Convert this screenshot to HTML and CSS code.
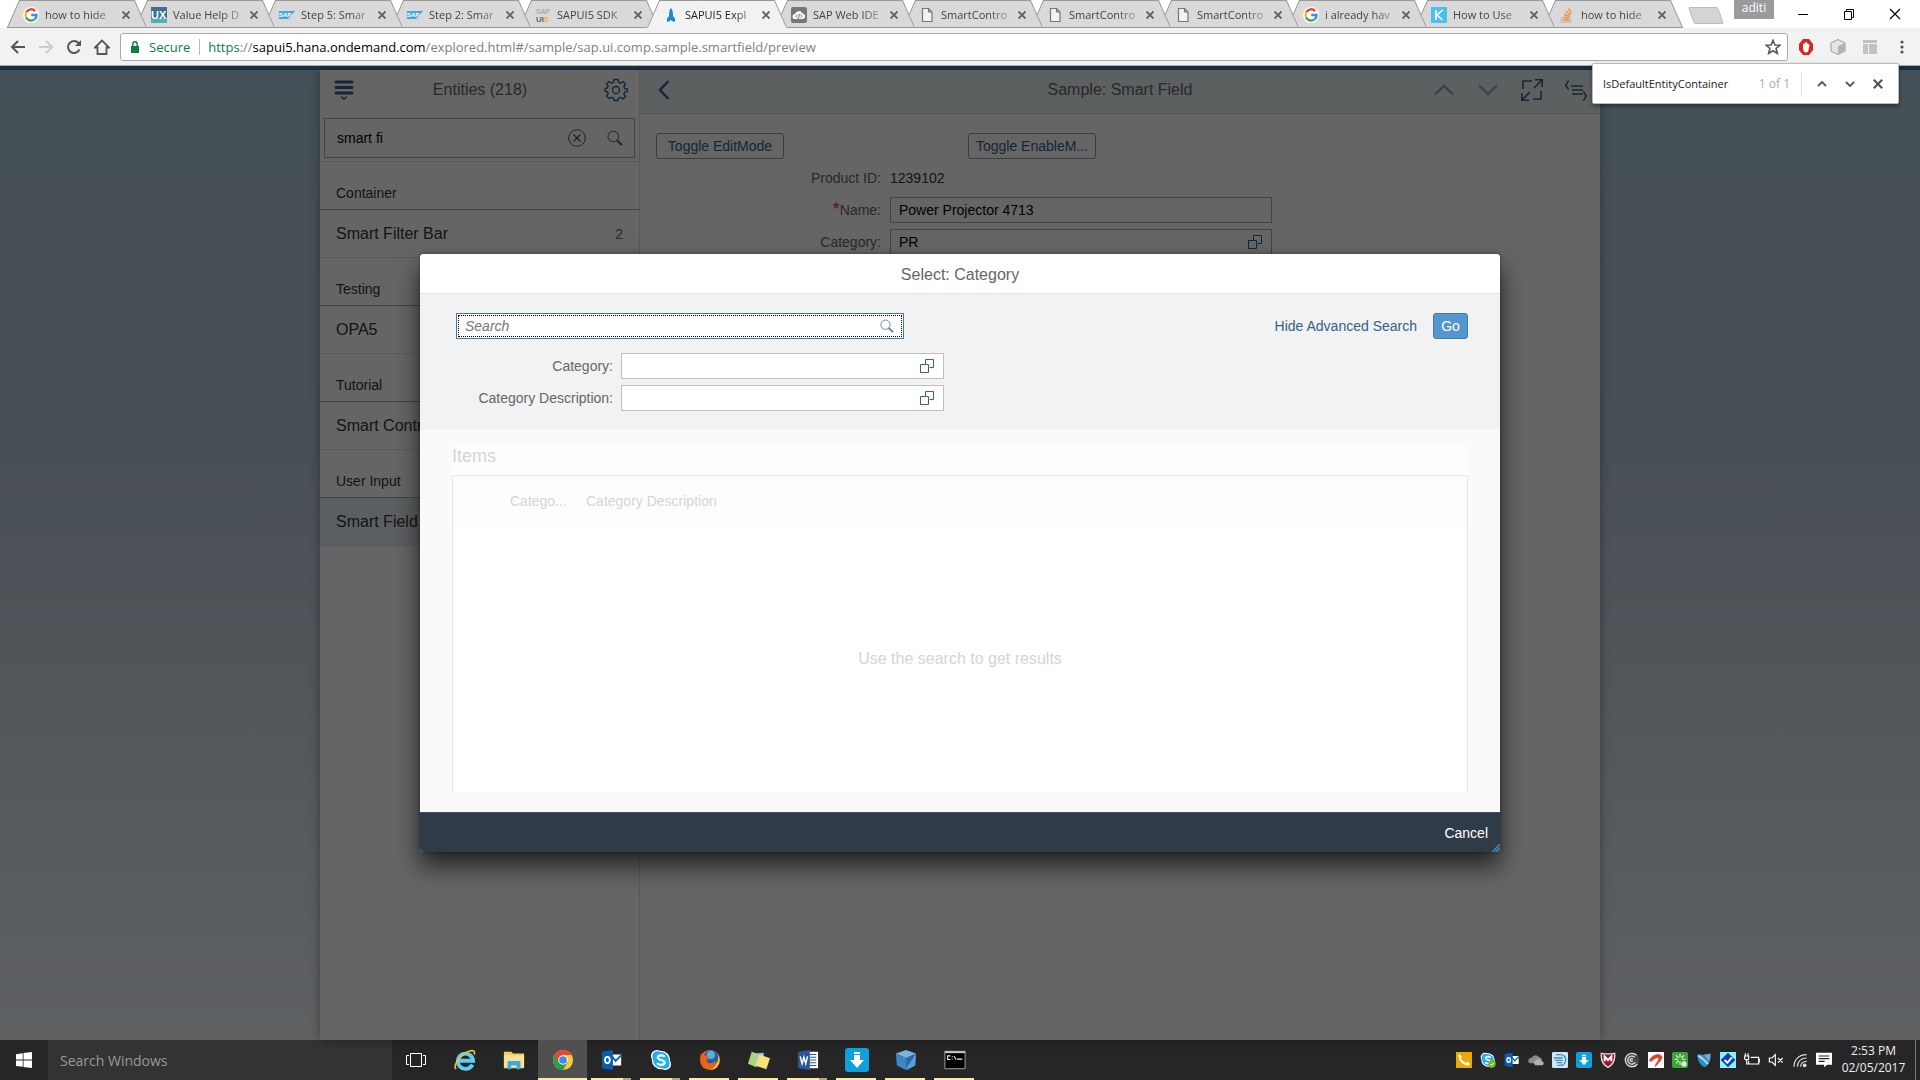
FILE: index.html
```html
<!DOCTYPE html>
<html lang="en">
<head>
<meta charset="utf-8">
<title>SAPUI5 Explored</title>
<link rel="stylesheet" href="styles.css">
</head>
<body>
<svg class="sprite" aria-hidden="true">
  <symbol id="x" viewBox="0 0 10 10"><path d="M1.5 1.5l7 7M8.500 1.500l-7 7" fill="none" stroke="currentColor" stroke-width="1.800"/></symbol>
  <symbol id="google" viewBox="0 0 16 16"><circle cx="8" cy="8" r="8" fill="#fff"/><g fill="none" stroke-width="2.400"><path d="M12.200 4A5.600 5.600 0 0 0 3.200 5.300" stroke="#ea4335"/><path d="M3.200 5.300a5.600 5.600 0 0 0 0 5.400" stroke="#fbbc05"/><path d="M3.200 10.700a5.600 5.600 0 0 0 8.400 1.700" stroke="#34a853"/><path d="M11.600 12.400A5.500 5.500 0 0 0 13.600 8H8.200" stroke="#4285f4"/></g></symbol>
  <symbol id="page" viewBox="0 0 16 16"><path d="M3.500 1.500h6l3.500 3.500v9.500H3.500zM9.500 1.500V5H13" fill="#f2f2f2" stroke="#777" stroke-width="1.200"/></symbol>
  <symbol id="chev-up" viewBox="0 0 20 12"><path d="M1 10.500L10 2l9 8.500" fill="none" stroke="currentColor" stroke-width="2.400"/></symbol>
  <symbol id="chev-down" viewBox="0 0 20 12"><path d="M1 1.500L10 10l9-8.500" fill="none" stroke="currentColor" stroke-width="2.400"/></symbol>
  <symbol id="lens" viewBox="0 0 16 16"><circle cx="6.300" cy="6.500" r="5.300" fill="none" stroke="currentColor"/><path d="M10 10.500l5 4.500" stroke="currentColor" stroke-width="2"/></symbol>
  <symbol id="help" viewBox="0 0 14 14"><path d="M.5 5.500h8v8h-8zM5.500 5V.5h8v8H9.500" fill="none" stroke="currentColor"/></symbol>
  <symbol id="outlook" viewBox="0 0 24 24"><path d="M10 6h12v12H10z" fill="#fff"/><path d="M12 8l4 5 6-6" fill="none" stroke="#0a5eb0" stroke-width="2"/><path d="M1 3l12-2v22L1 21z" fill="#0a5eb0"/><ellipse cx="7" cy="12" rx="2.600" ry="3.400" fill="none" stroke="#fff" stroke-width="2"/></symbol>
  <symbol id="skype" viewBox="0 0 24 24"><circle cx="7.500" cy="7.500" r="6.500" fill="#fff"/><circle cx="16.500" cy="16.500" r="6.500" fill="#fff"/><circle cx="12" cy="12" r="10" fill="#fff"/><circle cx="8" cy="8" r="5.500" fill="#1eaeea"/><circle cx="16" cy="16" r="5.500" fill="#1eaeea"/><circle cx="12" cy="12" r="8.600" fill="#1eaeea"/><path d="M16 8.500c-1-2-7.500-2.500-7.500.8S16 11.500 16 14.800 9 18 8 15.200" fill="none" stroke="#fff" stroke-width="2.400"/></symbol>
  <symbol id="download" viewBox="0 0 24 24"><rect width="24" height="24" rx="3" fill="#0e9fdd"/><path d="M9 4h6v2H9zM9 7h6v5h4l-7 8-7-8h4z" fill="#fff"/></symbol>
</svg>

<header class="browser">
  <div class="strip">
    <ul class="tabs">
      <li class="tab"><svg class="fav"><use href="#google"/></svg><span class="title">how to hide</span><button class="close" aria-label="Close tab"><svg><use href="#x"/></svg></button></li>
      <li class="tab"><svg class="fav" viewBox="0 0 16 16"><path d="M0 0h16v11H0z" fill="#3b7193"/><path d="M0 11h16v5H0z" fill="#56aeb5"/><text x="0" y="12" font-size="11" font-weight="bold" font-family="Liberation Sans, sans-serif" fill="#fff">UX</text></svg><span class="title">Value Help D</span><button class="close" aria-label="Close tab"><svg><use href="#x"/></svg></button></li>
      <li class="tab"><svg class="fav" viewBox="0 0 16 16"><path d="M0 4h16L9 12H0z" fill="#4aa5d8"/><text x="0" y="10" font-size="6" font-weight="bold" font-family="Liberation Sans, sans-serif" fill="#fff">SAP</text></svg><span class="title">Step 5: Smar</span><button class="close" aria-label="Close tab"><svg><use href="#x"/></svg></button></li>
      <li class="tab"><svg class="fav" viewBox="0 0 16 16"><path d="M0 4h16L9 12H0z" fill="#4aa5d8"/><text x="0" y="10" font-size="6" font-weight="bold" font-family="Liberation Sans, sans-serif" fill="#fff">SAP</text></svg><span class="title">Step 2: Smar</span><button class="close" aria-label="Close tab"><svg><use href="#x"/></svg></button></li>
      <li class="tab"><svg class="fav" viewBox="0 0 16 16" font-family="Liberation Sans, sans-serif" font-size="7"><text x="1" y="7" fill="#999">SAP</text><text x="1" y="15" font-size="8" font-weight="bold" fill="#666">UI<tspan fill="#f0b72f">5</tspan></text></svg><span class="title">SAPUI5 SDK</span><button class="close" aria-label="Close tab"><svg><use href="#x"/></svg></button></li>
      <li class="tab active"><svg class="fav" viewBox="0 0 16 16"><path d="M8 1c2 2 2 6 2 8l2 2.500V15l-2.500-.7L8 13l-1.500 1.300L4 15v-3.500L6 9c0-2 0-6 2-8z" fill="#1190cf"/></svg><span class="title">SAPUI5 Expl</span><button class="close" aria-label="Close tab"><svg><use href="#x"/></svg></button></li>
      <li class="tab"><svg class="fav" viewBox="0 0 16 16"><rect width="16" height="16" rx="2" fill="#777"/><path d="M4 12a2.500 2.500 0 0 1 0-5 4 4 0 0 1 7.500-.5A2.800 2.800 0 0 1 12 12z" fill="#fff"/><path d="M6.500 7.500L5 9.300 6.500 11M9.500 7.500L11 9.300 9.500 11M8.500 7l-1 5" fill="none" stroke="#777"/></svg><span class="title">SAP Web IDE</span><button class="close" aria-label="Close tab"><svg><use href="#x"/></svg></button></li>
      <li class="tab"><svg class="fav"><use href="#page"/></svg><span class="title">SmartContro</span><button class="close" aria-label="Close tab"><svg><use href="#x"/></svg></button></li>
      <li class="tab"><svg class="fav"><use href="#page"/></svg><span class="title">SmartContro</span><button class="close" aria-label="Close tab"><svg><use href="#x"/></svg></button></li>
      <li class="tab"><svg class="fav"><use href="#page"/></svg><span class="title">SmartContro</span><button class="close" aria-label="Close tab"><svg><use href="#x"/></svg></button></li>
      <li class="tab"><svg class="fav"><use href="#google"/></svg><span class="title">i already hav</span><button class="close" aria-label="Close tab"><svg><use href="#x"/></svg></button></li>
      <li class="tab"><svg class="fav" viewBox="0 0 16 16"><path d="M0 0h16v16H0z" fill="#4cbfea"/><path d="M5 3v10M11.500 3L6 8l5.500 5" fill="none" stroke="#fff" stroke-width="1.600"/></svg><span class="title">How to Use</span><button class="close" aria-label="Close tab"><svg><use href="#x"/></svg></button></li>
      <li class="tab"><svg class="fav" viewBox="0 0 16 16"><path d="M2.500 10v5h9v-5" fill="none" stroke="#bbb" stroke-width="1.300"/><path d="M4 12.800h6M4.200 10.300l6 .8M5 7.500l5.600 2M6.800 4.300l4.600 3.800M9.500 1.500l3 5" stroke="#f08a3c" stroke-width="1.400"/></svg><span class="title">how to hide</span><button class="close" aria-label="Close tab"><svg><use href="#x"/></svg></button></li>
    </ul>
    <button class="newtab" aria-label="New tab"></button>
    <div class="window">
      <span class="profile">aditi</span>
      <button class="winbtn" aria-label="Minimize"><svg viewBox="0 0 12 12"><path d="M1 6.500h10" stroke="#000"/></svg></button>
      <button class="winbtn" aria-label="Restore"><svg viewBox="0 0 12 12"><path d="M1.500 3.500h7v8h-7zM3.500 3.500v-2h7v8h-2" fill="none" stroke="#000"/></svg></button>
      <button class="winbtn" aria-label="Close"><svg viewBox="0 0 12 12"><path d="M1 1l10 10M11 1L1 11" stroke="#000" stroke-width="1.200"/></svg></button>
    </div>
  </div>
  <div class="toolbar">
    <button class="nav" aria-label="Back"><svg viewBox="0 0 16 16"><path d="M15 8H2M8 2L2 8l6 6" fill="none" stroke="#555" stroke-width="2"/></svg></button>
    <button class="nav" aria-label="Forward"><svg viewBox="0 0 16 16"><path d="M1 8h13M8 2l6 6-6 6" fill="none" stroke="#ccc" stroke-width="2"/></svg></button>
    <button class="nav" aria-label="Reload"><svg viewBox="0 0 16 16"><path d="M13.500 10.500A6 6 0 1 1 12.500 4" fill="none" stroke="#555" stroke-width="2"/><path d="M15 1v6H9z" fill="#555"/></svg></button>
    <button class="nav" aria-label="Home"><svg viewBox="0 0 16 16"><path d="M1 8.500L8 1.500l7 7h-2.500V15h-9V8.500z" fill="none" stroke="#555" stroke-width="1.800"/></svg></button>
    <div class="omnibox">
      <svg class="lock" viewBox="0 0 8 12"><path d="M0 5h8v7H0z" fill="#0b8043"/><path d="M1.800 5V3a2.200 2.200 0 0 1 4.400 0v2" fill="none" stroke="#0b8043" stroke-width="1.400"/></svg>
      <span class="secure">Secure</span>
      <span class="url"><span class="scheme">https</span>://<b>sapui5.hana.ondemand.com</b>/explored.html#/sample/sap.ui.comp.sample.smartfield/preview</span>
      <svg class="star" viewBox="0 0 14 14"><path d="M7 1.200l1.700 4 4.300.3-3.300 2.800 1.100 4.300L7 10.300l-3.800 2.300 1.100-4.300L1 5.500l4.300-.3z" fill="none" stroke="#555" stroke-width="1.400"/></svg>
    </div>
    <button class="ext" aria-label="Blocker"><svg viewBox="0 0 16 16"><path d="M5 0h6l4 5v6l-4 5H5l-4-5V5z" fill="#e0221c"/><path d="M5 9V5l1-1 1 1 .6-2L9 3l.5 2L10.500 5l1 1-1 5c0 1-1 2.500-2.500 2.500S5 12 5 9z" fill="#fff"/></svg></button>
    <button class="ext" aria-label="Box extension"><svg viewBox="0 0 16 16"><path d="M8 .5L15 4v8l-7 3.500L1 12V4z" fill="#e6e6e6" stroke="#999"/><path d="M8 7v8.500L15 12V4z" fill="#b5b5b5"/></svg></button>
    <button class="ext" aria-label="Layout extension"><svg viewBox="0 0 16 16"><path d="M1 1h14v3H1zM1 5h5v10H1zM7 5h8v10H7z" fill="#c2c2c2"/></svg></button>
    <button class="ext" aria-label="Menu"><svg viewBox="0 0 16 16" fill="#555"><circle cx="8" cy="3" r="1.600"/><circle cx="8" cy="8" r="1.600"/><circle cx="8" cy="13" r="1.600"/></svg></button>
  </div>
  <div class="find">
    <input class="find-input" aria-label="Find in page" value="IsDefaultEntityContainer">
    <span class="find-count">1 of 1</span>
    <button class="find-btn" aria-label="Previous"><svg viewBox="0 0 10 10"><path d="M1 7l4-4 4 4" fill="none" stroke="#555" stroke-width="1.800"/></svg></button>
    <button class="find-btn" aria-label="Next"><svg viewBox="0 0 10 10"><path d="M1 3l4 4 4-4" fill="none" stroke="#555" stroke-width="1.800"/></svg></button>
    <button class="find-btn find-close" aria-label="Close find"><svg><use href="#x"/></svg></button>
  </div>
</header>

<main class="workspace">
  <div class="shell">
    <aside class="master">
      <div class="bar">
        <button class="icon-btn" aria-label="Menu"><svg viewBox="0 0 20 20"><path d="M2 2h16M2 7.500h16M2 13h16" stroke="currentColor" stroke-width="3" stroke-linecap="round"/><path d="M7 16.500l3 2.500 3-2.500" fill="none" stroke="currentColor" stroke-width="1.500"/></svg></button>
        <h1 class="bar-title">Entities (218)</h1>
        <button class="icon-btn" aria-label="Settings"><svg class="gear" viewBox="0 0 24 24"><circle cx="12" cy="12" r="3.500" fill="none" stroke="currentColor" stroke-width="1.300"/><path d="M10 1.500h4l.6 2.800 2 .8 2.400-1.600 2.500 2.600-1.600 2.400.8 2 2.800.5v2.500l-2.800.6-.8 2 1.600 2.400-2.500 2.500-2.400-1.600-2 .8-.6 2.300h-4l-.6-2.300-2-.8L5 20.500 2.500 18l1.600-2.400-.8-2-2.300-.6v-2.500l2.300-.5.8-2L2.500 5.600 5 3.500l2.400 1.600 2-.8z" fill="none" stroke="currentColor" stroke-width="1.400" stroke-linejoin="round"/></svg></button>
      </div>
      <div class="search">
        <input class="search-input" aria-label="Search entities" value="smart fi">
        <button class="search-btn" aria-label="Clear"><svg viewBox="0 0 18 18"><circle cx="9" cy="9" r="8.300" fill="none" stroke="currentColor"/><path d="M5.500 5.500l7 7M12.500 5.500l-7 7" stroke="currentColor" stroke-width="1.300"/></svg></button>
        <button class="search-btn" aria-label="Search"><svg><use href="#lens"/></svg></button>
      </div>
      <ul class="list">
        <li class="group">Container</li>
        <li class="item"><a href="#">Smart Filter Bar</a><span class="count">2</span></li>
        <li class="group">Testing</li>
        <li class="item"><a href="#">OPA5</a></li>
        <li class="group">Tutorial</li>
        <li class="item"><a href="#">Smart Controls</a></li>
        <li class="group">User Input</li>
        <li class="item selected"><a href="#">Smart Field</a></li>
      </ul>
    </aside>
    <section class="detail">
      <div class="bar detail-bar">
        <button class="icon-btn back" aria-label="Back"><svg viewBox="0 0 12 20"><path d="M10.500 1L2 10l8.500 9" fill="none" stroke="currentColor" stroke-width="2.500"/></svg></button>
        <h2 class="bar-title">Sample: Smart Field</h2>
        <div class="actions">
          <button class="icon-btn off" aria-label="Previous sample"><svg viewBox="0 0 20 20"><use href="#chev-up" y="4" width="20" height="12"/></svg></button>
          <button class="icon-btn off" aria-label="Next sample"><svg viewBox="0 0 20 20"><use href="#chev-down" y="4" width="20" height="12"/></svg></button>
          <button class="icon-btn" aria-label="Full screen"><svg class="gear" viewBox="0 0 24 24"><path d="M3 11V3h9M21 13v8h-8M14 10L22 2M15 1.800h7.200V9M10 14l-8 8M1.800 15v7.200H9" fill="none" stroke="currentColor" stroke-width="1.600"/></svg></button>
          <button class="icon-btn" aria-label="Show code"><svg class="gear" viewBox="0 0 24 24"><path d="M7 8h12M8 12h11M8 16h11M5 3C2 3 4.500 7 1 7.500 4.500 8 2 11 5 11M19 14c3 0 .500 3.500 4 4-3.500.5-1 4-4 4" fill="none" stroke="currentColor" stroke-width="1.500"/></svg></button>
        </div>
      </div>
      <form class="sample">
        <div class="toggles"><button type="button" class="btn">Toggle EditMode</button><button type="button" class="btn">Toggle EnableM...</button></div>
        <div class="row"><span class="lbl">Product ID:</span><span class="value">1239102</span></div>
        <div class="row"><label class="lbl" for="name"><span class="req">*</span>Name:</label><div class="field"><input id="name" value="Power Projector 4713"></div></div>
        <div class="row"><label class="lbl" for="cat">Category:</label><div class="field"><input id="cat" value="PR"><button type="button" aria-label="Value help"><svg><use href="#help"/></svg></button></div></div>
      </form>
    </section>
  </div>

  <div class="overlay">
    <div class="dialog" role="dialog" aria-labelledby="dlg-title">
      <h2 class="dlg-head" id="dlg-title">Select: Category</h2>
      <form class="filter">
        <div class="filter-top">
          <div class="basic"><input placeholder="Search" aria-label="Search"><button type="button" aria-label="Search"><svg><use href="#lens"/></svg></button></div>
          <a class="link" href="#">Hide Advanced Search</a>
          <button type="button" class="go">Go</button>
        </div>
        <div class="adv"><label for="f1">Category:</label><div class="field"><input id="f1"><button type="button" aria-label="Value help"><svg><use href="#help"/></svg></button></div></div>
        <div class="adv"><label for="f2">Category Description:</label><div class="field"><input id="f2"><button type="button" aria-label="Value help"><svg><use href="#help"/></svg></button></div></div>
      </form>
      <div class="results">
        <h3 class="items">Items</h3>
        <div class="grid">
          <table>
            <thead><tr><th class="sel"></th><th class="c1">Catego...</th><th>Category Description</th></tr></thead>
            <tbody><tr><td colspan="3">Use the search to get results</td></tr></tbody>
          </table>
        </div>
      </div>
      <footer class="dlg-foot"><button class="cancel">Cancel</button><svg class="grip" viewBox="0 0 10 10"><path d="M0 10L10 0M4 10l6-6M8 10l2-2" stroke="#5596cd" stroke-width="1.500"/></svg></footer>
    </div>
  </div>
</main>

<footer class="taskbar">
  <button class="start" aria-label="Start"><svg viewBox="0 0 16 16" fill="#fff"><path d="M0 2.200l6.700-1v6.300H0zM7.500 1.100L16 0v7.500H7.500zM0 8.400h6.700v6.400L0 13.900zM7.500 8.400H16V16l-8.500-1.100z"/></svg></button>
  <input class="win-search" placeholder="Search Windows" aria-label="Search Windows">
  <button class="app view" aria-label="Task view"><svg viewBox="0 0 20 14" fill="none" stroke="#fff"><path d="M4.500.5h11v13h-11zM3 2.500H.5v9H3M17 2.500h2.500v9H17"/></svg></button>
  <button class="app" aria-label="Internet Explorer"><svg viewBox="0 0 24 24"><path d="M20 17a8.300 8.300 0 1 1 .8-4.200H5.500" fill="none" stroke="#5fcdf5" stroke-width="4.200"/><path d="M2 22C-1 17 8 5 18 2c4-1 5 1 4 4" fill="none" stroke="#f1c232" stroke-width="1.800"/></svg></button>
  <button class="app" aria-label="File Explorer"><svg viewBox="0 0 24 24"><path d="M1 3h8l2 2h12v16H1z" fill="#f4cd67"/><path d="M1 7h22v13H1z" fill="#fbe29a"/><path d="M5 13h14v9h-4v-4h-6v4H5z" fill="#35aee2"/></svg></button>
  <button class="app open current" aria-label="Chrome"><svg viewBox="0 0 24 24"><circle cx="12" cy="12" r="11" fill="#fbc934"/><path d="M12 12L2.500 6.500A11 11 0 0 0 12 23l5-8.500z" fill="#2d9d4c"/><path d="M2.500 6.500A11 11 0 0 1 21.500 6.500H12v6H6z" fill="#df4937"/><circle cx="12" cy="12" r="5.200" fill="#fff"/><circle cx="12" cy="12" r="4.200" fill="#4386f2"/></svg></button>
  <button class="app open multi" aria-label="Outlook"><svg><use href="#outlook"/></svg></button>
  <button class="app open multi" aria-label="Skype"><svg><use href="#skype"/></svg></button>
  <button class="app open" aria-label="Firefox"><svg viewBox="0 0 24 24"><circle cx="12" cy="12" r="11" fill="#e8641b"/><path d="M21 6c4 8-1 17-9 17 6-3 9-8 9-17z" fill="#f8c33b"/><circle cx="13" cy="9.500" r="8" fill="#1b5fa8"/><circle cx="13" cy="6.500" r="4.500" fill="#51b0e6"/><path d="M2 5l3 2c3-1 4 1 7 3-2 2-4 1-4 3 2 4 8 3 10-1 1 5-4 9-8 9S0 17 2 5z" fill="#e8641b"/></svg></button>
  <button class="app open" aria-label="Sticky Notes"><svg viewBox="0 0 24 24"><path d="M4 3l9 3-4 14-9-4z" fill="#a9d87b"/><path d="M8 5l9-1 1 14-10 1z" fill="#9cc8d8"/><path d="M12 6l12 4-4 12-12-4z" fill="#f9e07a"/></svg></button>
  <button class="app open multi" aria-label="Word"><svg viewBox="0 0 24 24"><path d="M11 3h12v18H11z" fill="#fff"/><path d="M13 6h8M13 9h8M13 12h8M13 15h8M13 18h8" stroke="#2a5699" stroke-width="1.300"/><path d="M1 3l13-2v22L1 21z" fill="#2a5699"/><path d="M3.500 8l2 8 2-7 2 7 2-8" fill="none" stroke="#fff" stroke-width="1.600"/></svg></button>
  <button class="app open" aria-label="Downloader"><svg class="big"><use href="#download"/></svg></button>
  <button class="app open" aria-label="VirtualBox"><svg viewBox="0 0 24 24"><path d="M12 1l11 4-11 5L1 5z" fill="#7db4df"/><path d="M1 5l11 5v13L2 18z" fill="#3f86c4"/><path d="M23 5l-11 5v13l10-5z" fill="#2a6ba8"/><path d="M23 5L13 20v3l9-5z" fill="#5a9ed4"/></svg></button>
  <button class="app open" aria-label="Command Prompt"><svg viewBox="0 0 24 24"><path d="M1 2.500h22v19H1z" fill="#000" stroke="#aaa"/><path d="M1 3.500h22" stroke="#ccc" stroke-width="2"/><path d="M7 7.500H4v4h3M9 8v1M9 10.500v1M11 7.500l2 4M14 11h6" fill="none" stroke="#eee" stroke-width="1.200"/></svg></button>
  <div class="tray">
    <svg viewBox="0 0 24 24"><path d="M0 0h24v24H0z" fill="#eda900"/><path d="M5 5c1 8 6 13 14 14M4 4l4 4M16 16l4 3" stroke="#fff" stroke-width="3" fill="none"/></svg>
    <svg viewBox="0 0 24 24"><use href="#skype"/><circle cx="18" cy="18" r="5.500" fill="#74b520"/><path d="M15.500 18l2 2 3-4" fill="none" stroke="#fff" stroke-width="1.500"/></svg>
    <svg><use href="#outlook"/></svg>
    <svg viewBox="0 0 24 24"><path d="M4 17a4 4 0 0 1 1-8 7 7 0 0 1 12-1 5 5 0 0 1 2 9z" fill="#8b8b8b"/><path d="M11 20a4 4 0 0 1 0-7 5 5 0 0 1 9 1 3 3 0 0 1 1 6z" fill="#b0b0b0"/></svg>
    <svg viewBox="0 0 24 24"><rect width="24" height="24" rx="2" fill="#cfe6f5"/><path d="M6 4h6c12 0 11 16 0 16H8M3 9h13M5 12.500h11M7 16h8" fill="none" stroke="#3e8fc4" stroke-width="2"/></svg>
    <svg><use href="#download"/></svg>
    <svg viewBox="0 0 24 24"><path d="M2 2c6 1 14 1 20 0 1 10-2 17-10 21C4 19 1 12 2 2z" fill="#a31431" stroke="#ddd" stroke-width="2"/><path d="M7 14V7l5 5 5-5v7" fill="none" stroke="#fff" stroke-width="3"/></svg>
    <svg viewBox="0 0 24 24"><circle cx="12" cy="12" r="11" fill="#444"/><path d="M20 18a10 10 0 1 1-1-13M17 15a6 6 0 1 1-1-7M13 13a2 2 0 1 1 0-2" fill="none" stroke="#ddd" stroke-width="2"/></svg>
    <svg viewBox="0 0 24 24"><path d="M0 0h24v24H0z" fill="#fff"/><path d="M2 13C6 3 20 1 21 8c0 4-5 8-10 14-1-4 5-8 5-12 0-3-7 0-11 4z" fill="#d94430" stroke="#d94430"/></svg>
    <svg viewBox="0 0 24 24"><rect width="24" height="24" rx="3" fill="#3fa33d"/><path d="M12 3v5M12 14v5M4 11h5M15 11h5M6 5l4 4M18 5l-4 4M6 17l4-4" stroke="#c5efbd" stroke-width="2"/><circle cx="18" cy="18" r="4" fill="#e5e5e5"/></svg>
    <svg viewBox="0 0 24 24"><path d="M2 3c7 2 14 1 20-1 1 10-2 17-9 21C5 19 2 12 2 3z" fill="#2b8fc8"/><path d="M3 6c6 1 8 6 15 12" fill="none" stroke="#b9d3e2" stroke-width="3"/><path d="M12 4l9-1c0 4 0 8-2 11z" fill="#7fa9c2"/></svg>
    <svg viewBox="0 0 24 24"><path d="M0 0h24v24H0z" fill="#8ff0f8"/><path d="M12 1l11 11-11 11L1 12z" fill="#0a3fc2"/><path d="M7 12l4 4 7-8" fill="none" stroke="#fff" stroke-width="3"/></svg>
    <svg viewBox="0 0 24 24" fill="none" stroke="#fff" stroke-width="1.700"><path d="M10 8h12v10H7v-5M22 11h2v4h-2M1 6h6v4c0 2-6 2-6 0zM2 6V2M6 6V2M4 12v6h3"/></svg>
    <svg viewBox="0 0 24 24" fill="none" stroke="#fff" stroke-width="1.700"><path d="M2 9h4l5-5v16l-5-5H2zM15 9l7 7M22 9l-7 7"/></svg>
    <svg viewBox="0 0 24 24" fill="none" stroke="#ddd" stroke-width="1.800"><path d="M3 22C3 11 11 4 22 4M8 22C8 14 14 9 22 9M13 22c0-5 4-8 9-8"/><circle cx="19" cy="20" r="2" fill="#ddd"/></svg>
    <svg viewBox="0 0 24 24"><path d="M0 1h24v18h-7l-5 4v-4H0z" fill="#fff"/><path d="M4 6h16M4 10h16M4 14h9" stroke="#222" stroke-width="1.700"/></svg>
  </div>
  <div class="clock"><span>2:53 PM</span><span>02/05/2017</span></div>
</footer>
</body>
</html>
```
FILE: styles.css
```css
* { box-sizing: border-box; }
body { margin: 0; min-height: 100vh; display: flex; flex-direction: column; font: 14px/20px "Liberation Sans", Arial, sans-serif; color: #333; overflow: hidden; }
button { border: 0; background: none; padding: 0; margin: 0; font: inherit; color: inherit; display: grid; place-items: center; }
input { font: inherit; color: inherit; min-width: 0; outline: 0; margin: 0; }
ul { list-style: none; margin: 0; padding: 0; }
h1, h2, h3 { margin: 0; font-weight: normal; }
a { color: inherit; text-decoration: none; }
svg { display: block; width: 16px; height: 16px; flex: none; }
.sprite { position: absolute; width: 0; height: 0; }

/* Browser chrome */
.browser { position: relative; z-index: 5; font: 12px/16px "Open Sans", "Noto Sans", sans-serif; }
.strip { display: flex; height: 28px; background: #fff; }
.tabs { display: flex; padding-left: 13px; }
.tab { position: relative; isolation: isolate; display: flex; align-items: center; width: 128px; padding: 2px 7px 0 10px; color: #444; font-size: 11px; }
.tab::before, .tab::after { content: ""; position: absolute; z-index: -1; top: 0; bottom: 0; background: #d9d9d9; border: 0 solid #999; border-top-width: 1px; border-bottom-width: 1px; }
.tab::before { left: 0; width: 50%; transform: skewX(-24deg); border-left-width: 1px; }
.tab::after { right: 0; width: 60%; transform: skewX(24deg); border-right-width: 1px; }
.tab.active { color: #222; }
.tab.active::before, .tab.active::after { background: #f2f2f2; border-bottom-color: #f2f2f2; }
.tab:nth-child(1) { z-index: 12; }
.tab:nth-child(2) { z-index: 11; }
.tab:nth-child(3) { z-index: 10; }
.tab:nth-child(4) { z-index: 9; }
.tab:nth-child(5) { z-index: 8; }
.tab:nth-child(6) { z-index: 13; }
.tab:nth-child(7) { z-index: 7; }
.tab:nth-child(8) { z-index: 6; }
.tab:nth-child(9) { z-index: 5; }
.tab:nth-child(10) { z-index: 4; }
.tab:nth-child(11) { z-index: 3; }
.tab:nth-child(12) { z-index: 2; }
.tab:nth-child(13) { z-index: 1; }
.title { flex: 1; margin-left: 6px; white-space: nowrap; -webkit-mask-image: linear-gradient(90deg, #000 48px, rgba(0,0,0,.25)); mask-image: linear-gradient(90deg, #000 48px, rgba(0,0,0,.25)); }
.close { width: 16px; height: 16px; margin-left: 2px; color: #666; }
.close svg { width: 10px; height: 10px; }
.newtab { width: 30px; height: 17px; margin: 7px 0 0 14px; background: #d4d4d4; border: 1px solid #bbb; border-radius: 2px; transform: skewX(20deg); }
.window { display: flex; margin-left: auto; align-items: center; padding-right: 2px; }
.profile { align-self: flex-start; width: 40px; height: 19px; margin-right: 6px; background: #9b9b9b; color: #fff; text-align: center; }
.winbtn { width: 46px; height: 28px; }
.winbtn svg { width: 12px; height: 12px; }
.toolbar { display: flex; align-items: center; height: 38px; padding: 0 2px 0 4px; background: #f2f2f2; border-bottom: 1px solid #aaa; }
.nav { width: 28px; height: 28px; }
.omnibox { flex: 1; display: flex; align-items: center; height: 28px; margin: 0 2px 0 4px; padding: 0 6px 0 10px; background: #fff; border: 1px solid #aaa; border-radius: 3px; font-size: 13px; }
.lock { width: 8px; height: 12px; }
.secure { margin-left: 10px; padding-right: 9px; border-right: 1px solid #bbb; color: #0b8043; }
.url { flex: 1; margin-left: 8px; color: #808080; }
.url b { font-weight: normal; color: #000; }
.scheme { color: #0b8043; }
.ext { width: 32px; height: 28px; }
.find { position: absolute; top: 63px; right: 21px; width: 307px; height: 41px; display: flex; align-items: center; padding: 0 6px 0 10px; background: #fff; border: 1px solid #bbb; border-radius: 2px; box-shadow: 0 2px 4px rgba(0,0,0,.4); }
.find-input { flex: 1; border: 0; padding: 0; color: #222; font-size: 11px; }
.find-count { padding-right: 11px; margin-right: 6px; line-height: 24px; border-right: 1px solid #ddd; color: #aaa; }
.find-btn { width: 28px; height: 28px; color: #555; }
.find-btn svg { width: 10px; height: 10px; }
.find-close svg { width: 12px; height: 12px; }

/* Application behind the dialog */
.workspace { position: relative; flex: 1; display: flex; justify-content: center; border-top: 4px solid #427cac; background: linear-gradient(#abc8da, #b5c6d5 40%, #ecf1f6); }
.shell { display: flex; width: 1280px; max-width: 100%; background: #fdfdfd; box-shadow: 0 0 10px rgba(0,0,0,.35); }
.master { width: 25%; border-right: 1px solid #ddd; }
.detail { flex: 1; }
.bar { display: flex; align-items: center; justify-content: space-between; height: 44px; padding: 0 11px 4px 12px; color: #346187; }
.bar-title { font-size: 16px; color: #666; }
.icon-btn { width: 24px; height: 32px; }
.icon-btn svg { width: 20px; height: 20px; }
.icon-btn .gear { width: 24px; height: 24px; }
.off { color: #8ba0b0; }
.detail-bar { display: grid; grid-template-columns: 1fr auto 1fr; padding-right: 12px; background: #e8eff2; border-bottom: 1px solid #ccd8de; }
.actions { display: flex; justify-content: flex-end; gap: 20px; }
.back svg { width: 12px; }
.search { display: flex; align-items: center; height: 40px; margin: 4px 4px 3px; border: 1px solid #aaa; }
.search-input { flex: 1; height: 38px; padding: 0 12px; border: 0; background: none; color: #000; }
.search-btn { width: 38px; height: 38px; color: #555; }
.search-btn:first-of-type svg { width: 18px; height: 18px; }
.list { border-top: 1px solid #ddd; }
.group { display: flex; align-items: flex-end; height: 48px; padding: 0 16px 6px; border-bottom: 1px solid #aaa; }
.item { display: flex; align-items: center; justify-content: space-between; height: 48px; padding: 0 16px; border-bottom: 1px solid #e0e0e0; font-size: 16px; }
.count { font-size: 14px; color: #3b7a6a; }
.selected { background: #e5eef2; }
.sample { display: grid; gap: 6px; padding: 19px 16px; }
.toggles { display: grid; grid-template-columns: repeat(3, 1fr); width: calc(100% + 8px); }
.btn { display: block; width: 128px; height: 26px; padding: 0 4px; border: 1px solid #999; border-radius: 3px; color: #346187; white-space: nowrap; }
.row { display: grid; grid-template-columns: 225fr 382fr 303fr; column-gap: 9px; height: 26px; align-items: center; }
.lbl { text-align: right; color: #666; }
.req { color: #e52929; font-size: 18px; line-height: 14px; }
.value { color: #333; }
.field { display: flex; align-items: center; height: 26px; border: 1px solid #aaa; color: #000; }
.field input { flex: 1; height: 24px; padding: 0 8px; border: 0; background: none; }
.field button { width: 32px; height: 24px; color: #346187; }
.field svg { width: 14px; height: 14px; }

/* Value help dialog */
.overlay { position: absolute; top: -4px; right: 0; bottom: 0; left: 0; display: grid; place-items: center; background: rgba(0,0,0,.6); }
.dialog { width: 1080px; max-width: 100%; background: #fafafa; border-radius: 4px; overflow: hidden; box-shadow: 0 14px 24px rgba(0,0,0,.65), 0 0 4px rgba(0,0,0,.3); }
.dlg-head { height: 40px; padding-top: 1px; line-height: 40px; background: #fff; border-bottom: 1px solid #e5e5e5; text-align: center; font-size: 16px; color: #666; }
.filter { display: grid; gap: 6px; padding: 19px 32px 19px 36px; background: #f2f2f2; }
.filter-top { display: flex; align-items: center; margin-bottom: 8px; }
.basic { display: flex; width: 448px; height: 26px; background: #fff; border: 1px solid #427cac; outline: 1px dotted #000; outline-offset: -3px; }
.basic input { flex: 1; padding: 0 8px; border: 0; background: none; }
.basic input::placeholder { font-style: italic; color: #757575; opacity: 1; }
.basic button { width: 32px; color: #427cac; }
.basic svg { width: 14px; height: 14px; }
.link { margin-left: auto; margin-right: 16px; color: #346187; }
.go { width: 35px; height: 26px; border-radius: 3px; background: #5496cd; border: 1px solid #427cac; color: #fff; }
.adv { display: grid; grid-template-columns: 157px 323px; column-gap: 8px; align-items: center; }
.adv label { text-align: right; color: #666; }
.adv .field { background: #fff; border-color: #bfbfbf; }
.results { padding: 14px 32px 20px; color: #d5d5d5; }
.items { height: 31px; line-height: 24px; background: #fdfdfd; font-size: 18px; }
.grid { height: 317px; border: 1px solid #e5e5e5; border-bottom: 0; background: #fff; }
table { width: 100%; height: 100%; border-collapse: collapse; table-layout: fixed; }
th { height: 54px; padding: 0 0 4px; background: #fdfdfd; font-weight: normal; text-align: left; white-space: nowrap; }
.sel { width: 57px; }
.c1 { width: 76px; }
td { padding: 0 0 4px; text-align: center; font-size: 16px; }
.dlg-foot { position: relative; display: flex; align-items: center; justify-content: flex-end; height: 40px; padding-right: 12px; background: #2f3c48; border-top: 1px solid #3d5565; }
.cancel { height: 26px; color: #fff; }
.grip { position: absolute; right: 0; bottom: 0; width: 8px; height: 8px; }

/* Windows taskbar */
.taskbar { display: flex; height: 40px; background: #262626; font: 12px/17px "Open Sans", "Noto Sans", sans-serif; color: #eee; }
.start { width: 48px; }
.win-search { width: 344px; padding: 0 12px; border: 0; background: #333; color: #999; font-size: 14px; }
.win-search::placeholder { color: #999; opacity: 1; }
.app { position: relative; width: 49px; }
.app svg { width: 22px; height: 22px; }
.app .big { width: 24px; height: 24px; }
.view svg { width: 20px; height: 14px; }
.view { width: 48px; }
.open::after { content: ""; position: absolute; left: 4px; right: 5px; bottom: 0; height: 2px; background: #fdeaa8; }
.multi::after { background: linear-gradient(90deg, #fdeaa8 32px, #b5a878 32px); }
.current { background: #505050; }
.current::after { left: 0; right: 0; }
.tray { display: flex; align-items: center; gap: 8px; margin-left: auto; }
.clock { display: flex; flex-direction: column; justify-content: center; width: 84px; padding-bottom: 2px; text-align: center; border-right: 1px solid #777; margin-right: 4px; }
```
